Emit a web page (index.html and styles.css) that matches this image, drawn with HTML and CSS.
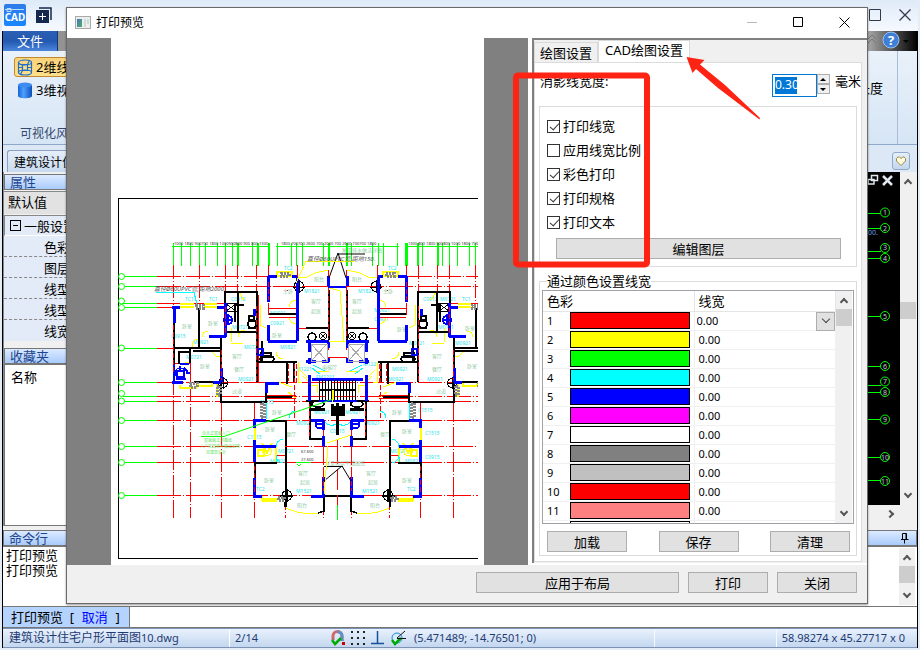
FILE: index.html
```html
<!DOCTYPE html>
<html lang="zh-CN">
<head>
    <meta charset="UTF-8">
    <meta name="viewport" content="width=device-width, initial-scale=1.0">
    <title>打印预览</title>
    <link rel="stylesheet" href="styles.css">
</head>
<body>
    <div class="app">
        <header class="app-title">
            <svg class="logo" width="22" height="22" viewBox="0 0 22 22">
                <defs>
                    <linearGradient id="logoFill" x1="0" y1="0" x2="0" y2="1">
                        <stop offset="0" stop-color="#2f7be8"/><stop offset="1" stop-color="#1a86ff"/>
                    </linearGradient>
                </defs>
                <rect width="22" height="22" rx="2" fill="url(#logoFill)"/>
                <path d="M1 5.5H20M3 7.5h4v-3h-4z" stroke="#b9dcff" fill="none"/>
                <text x="11" y="17" text-anchor="middle" font-size="10" font-weight="700" fill="#fff">CAD</text>
            </svg>
            <button class="quick" aria-label="新建">
                <svg width="16" height="16" viewBox="0 0 16 16"><path d="M3 1H15V13" fill="none" stroke="#14294b" stroke-width="1.5"/><rect y="3" width="13" height="13" fill="#14294b"/><path d="M6.500 6v7M3 9.500h7" stroke="#fff"/></svg>
            </button>
            <span class="spacer"></span>
            <button class="win-btn" aria-label="最大化"><svg width="12" height="12" viewBox="0 0 12 12"><path d="M.5.5h11v11H.5z" fill="none" stroke="#33394a"/></svg></button>
            <button class="win-btn" aria-label="关闭"><svg width="12" height="12" viewBox="0 0 12 12"><path d="M.5.5l11 11M11.500.5l-11 11" fill="none" stroke="#33394a" stroke-width="1.3"/></svg></button>
        </header>

        <div class="frame">
            <nav class="ribbon-tabs">
                <button class="file-tab">文件</button>
                <span class="spacer"></span>
                <svg width="50" height="20" viewBox="0 0 50 20">
                    <path d="M1 8l4-4 4 4M1 12l4-4 4 4" fill="none" stroke="#777"/>
                    <circle cx="24" cy="9" r="8" fill="#3f7fd6" stroke="#9cc0f0"/>
                    <text x="24" y="14" text-anchor="middle" font-size="13" font-weight="700" fill="#fff">?</text>
                    <path d="M36 9h6l-3 3z" fill="#000"/>
                </svg>
            </nav>

            <section class="ribbon">
                <div class="ribbon-group">
                    <button class="ribbon-btn active">
                        <svg width="16" height="17" viewBox="0 0 16 17"><g fill="none" stroke="#1f6fcc" stroke-width="1.2"><ellipse cx="8" cy="3.500" rx="6.500" ry="2.500"/><ellipse cx="8" cy="13.500" rx="6.500" ry="2.500"/><path d="M1.500 3.500v10M14.500 3.500v10M5.500 5.500v6h5v-6zM5.500 11.500l-2 4M10.500 5.500l2-4M1.500 8.500h4M10.500 8.500h4"/></g></svg>
                        <span>2维线框</span>
                    </button>
                    <button class="ribbon-btn">
                        <svg width="16" height="17" viewBox="0 0 16 17"><defs><linearGradient id="cyl"><stop offset="0" stop-color="#1565d8"/><stop offset=".4" stop-color="#4fa0ff"/><stop offset="1" stop-color="#0d4fb8"/></linearGradient></defs><path d="M1 3v11c0 3 14 3 14 0V3z" fill="url(#cyl)"/><ellipse cx="8" cy="3" rx="7" ry="2.500" fill="#3f8df0"/></svg>
                        <span>3维视图</span>
                    </button>
                    <p class="ribbon-caption">可视化风格</p>
                </div>
                <div class="ribbon-end"><span>长度</span></div>
            </section>

            <div class="doc-tabs">
                <button class="doc-tab">建筑设计住宅</button>
                <span class="spacer"></span>
                <button class="fav-btn" aria-label="收藏"><svg width="12" height="12" viewBox="0 0 12 12"><path d="M6 10.500L1.500 6V3.500L3 2h1.500L6 3.500 7.500 2H9l1.500 1.500V6z" fill="#fffbe0" stroke="#9a8a3c"/></svg></button>
            </div>

            <main class="workspace">
                <aside class="side">
                    <h2 class="bar">属性</h2>
                    <div class="default-row">默认值</div>
                    <div class="prop-head"><i class="minus"></i>一般设置</div>
                    <ul class="props">
                        <li>色彩</li>
                        <li>图层</li>
                        <li>线型</li>
                        <li>线型</li>
                        <li>线宽</li>
                    </ul>
                    <h2 class="bar fav-bar">收藏夹</h2>
                    <div class="fav-list">名称</div>
                </aside>
                <section class="model">
                    <div class="model-view">
                        <svg width="34" height="332" viewBox="866 172 34 332">
                            <g stroke="#dfe6ee" fill="none" stroke-width="1.500"><path d="M871.500 175.500h6v5h-6zM868 179.500h6v4.500h-6z" fill="#000"/><path d="M883 176l9 9M892 176l-9 9" stroke-width="2.500"/></g>
                            <g stroke="#0f0" fill="none">
                                <path d="M866 213.500h14M866 228.500h14M866 251.500h15M866 258.500h14M866 316.500h14M866 366.500h14M866 385.500h15M866 392.500h14M866 419.500h14M866 457.500h14M866 480.500h14"/>
                                <circle cx="885" cy="212.500" r="4.500"/><circle cx="885" cy="228" r="4.500"/><circle cx="885" cy="248" r="4.500"/><circle cx="885" cy="258" r="4.500"/><circle cx="885" cy="316" r="4.500"/><circle cx="885" cy="366" r="4.500"/><circle cx="885" cy="381.500" r="4.500"/><circle cx="885" cy="392" r="4.500"/><circle cx="885" cy="419.500" r="4.500"/><circle cx="885" cy="457" r="4.500"/><circle cx="885" cy="481" r="4.500"/>
                            </g>
                            <g fill="#c8c8dc" font-size="7" text-anchor="middle">
                                <text x="885" y="215">1</text><text x="885" y="231">2</text><text x="885" y="250">3</text><text x="885" y="261">4</text><text x="885" y="319">5</text><text x="885" y="369">6</text><text x="885" y="384">7</text><text x="885" y="395">8</text><text x="885" y="422">9</text><text x="885" y="460">10</text><text x="885" y="484">11</text>
                            </g>
                            <text x="868" y="235" font-size="7" fill="#6d9be0">00.</text>
                        </svg>
                    </div>
                    <div class="vscroll"><i class="arrow up"></i><i class="thumb"></i><i class="arrow down"></i></div>
                    <div class="hscroll"><i class="arrow right"></i></div>
                </section>
            </main>

            <h2 class="bar command-bar">命令行
                <svg width="8" height="11" viewBox="0 0 8 11"><path d="M1.500 6V.5h4V6M5 .5V6M0 6.500h7.500M3.500 7v3.500" fill="none" stroke="#000"/></svg>
            </h2>
            <div class="command-log">
                <div><p>打印预览</p><p>打印预览</p></div>
                <div class="vscroll"><i class="arrow up"></i><i class="thumb"></i><i class="arrow down"></i></div>
            </div>
            <div class="command-line">
                <label for="cmd">打印预览 &nbsp;[ &nbsp;<a href="#">取消</a> &nbsp;]</label>
                <input type="text" id="cmd">
            </div>
            <footer class="status">
                <span class="file-name">建筑设计住宅户形平面图<small>10.dwg</small></span>
                <span class="page-no">2/14</span>
                <span class="snaps">
                    <svg width="16" height="16" viewBox="0 0 16 16"><path d="M3 10V6a4 4 0 0 1 9 0v5" fill="none" stroke="#d06a6a" stroke-width="3"/><path d="M7.500 2a4 4 0 0 1 4.500 4v5" fill="none" stroke="#5f8fc8" stroke-width="3"/><path d="M2 10l3 4 6-6" fill="none" stroke="#0a0" stroke-width="2.500"/><rect x="12" y="12" width="3" height="3" fill="#c00"/></svg>
                    <svg width="16" height="16" viewBox="0 0 16 16"><path d="M1 2h15M1 8h15M1 14h15" stroke="#222" stroke-width="2" stroke-dasharray="2 4"/></svg>
                    <svg width="16" height="16" viewBox="0 0 16 16"><path d="M7.500 1v12M1 13.500h13" stroke="#14529e" stroke-width="1.500" fill="none"/></svg>
                    <svg width="16" height="16" viewBox="0 0 16 16"><circle cx="7" cy="8" r="5" fill="#d4ecff" stroke="#28c"/><path d="M2 10l3 4 6-6" fill="none" stroke="#0a0" stroke-width="2.500"/><path d="M7 8l8-7M7 8.500h9" stroke="#111"/></svg>
                </span>
                <span class="coords">(5.471489; -14.76501; 0)</span>
                <span class="cell"></span>
                <span class="extent">58.98274 x 45.27717 x 0</span>
            </footer>
        </div>
    </div>

    <div class="dialog" role="dialog" aria-labelledby="dialogTitle">
        <header class="dialog-title">
            <svg width="16" height="13" viewBox="0 0 16 13"><defs><linearGradient id="ic" x1="0" y1="0" x2="1" y2="1"><stop offset="0" stop-color="#4a76b8"/><stop offset="1" stop-color="#4fae6a"/></linearGradient></defs><rect x=".5" y=".5" width="15" height="12" fill="#eee" stroke="#aaa"/><rect x="2" y="3" width="5" height="8" fill="url(#ic)"/><path d="M9 3h2v8H9zM12 3h2v5h-2z" fill="#c9dcd6"/></svg>
            <h1 id="dialogTitle">打印预览</h1>
            <span class="spacer"></span>
            <button class="win-btn" aria-label="最小化" disabled><svg width="11" height="11" viewBox="0 0 11 11"><path d="M0 5.500h10" stroke="#bbb"/></svg></button>
            <button class="win-btn" aria-label="最大化"><svg width="11" height="11" viewBox="0 0 11 11"><path d="M.5.5h9v9h-9z" fill="none" stroke="#000"/></svg></button>
            <button class="win-btn" aria-label="关闭"><svg width="11" height="11" viewBox="0 0 11 11"><path d="M.5.5l10 10M10.500.5l-10 10" stroke="#000"/></svg></button>
        </header>

        <div class="dialog-body">
            <div class="preview">
                <svg class="paper" viewBox="111 38 373 527" preserveAspectRatio="xMinYMin">
                    <defs>
                        <clipPath id="sheet"><path d="M111 190H478V565H111z"/></clipPath>
                        <!-- left half of the floor, mirrored for the right half -->
                        <g id="half" fill="none">
                            <!-- dimension ticks -->
                            <path d="M172 246.500H270M276 246.500H338M173.500 243v23M181.500 243v23M190.500 243v23M199.500 243v23M205.500 243v23M217.500 243v23M225.500 243v23M232.500 243v23M252.500 243v23M269.500 243v23M277.500 243v23M291.500 243v23M296.500 243v23M302.500 243v23M323.500 243v23" stroke="#0f0"/>
                            <path d="M237.500 243v23M257.500 243v23M268.500 243v23M328.500 243v23" stroke="#0f0" stroke-width="2"/>
                            <path d="M173.500 265v40M199.500 265v83M225.500 265v40M237.500 265v60M256.500 265v30M268.500 265v50M297.500 265v12" stroke="#f00" stroke-dasharray="14 2 1 2"/>
                            <path d="M173.500 375v143M190.500 382v136M221.500 402v116M254.500 402v116M285.500 440v78M323.500 420v98" stroke="#f00" stroke-dasharray="20 2 1 2"/>
                            <!-- windows, doors and balconies -->
                            <path d="M180 304h14M180 307h14M204 304h13M204 307h13M173.500 333v6M277 271.500h15v4h-15zM262 498.500h15M262 500.500h15M254.500 428v12M180 384.500v3h17M198 382v4h14v-4M217 384v12h4M262 496v4h15" stroke="#ff0" stroke-width="2"/>
                            <path d="M193 348a6 6 0 0 1 6-9M202 337a6 6 0 0 1 6-6M231 328v14M231 343.500h12M238 337a7 7 0 0 1 7-7M260 305v20l6 3M289 307a8 8 0 0 1 7-7M289 317a8 8 0 0 0 7 7M212 350a8 8 0 0 0 8 7M185 362h5v-10M239 292l5 8M297 277l8 1 10-5 13-3M298 362v20h4M303 376l6 6M259 362h12M276 352a7 7 0 0 0 7 7M278 382l14 5M288 392l8 6M300 370l8 8M315 371h14M310 385h7v8M286 508q14 7 32 5" stroke="#ff0"/>
                            <path d="M256 447h20v15M262 443l5 10 5-10M258 450h6v6h-6z" stroke="#ff0" stroke-width="2"/><circle cx="267" cy="451" r="4.500" stroke="#ff0"/>
                            <!-- axes inside the plan -->
                            <path d="M269 308.500h28M269 317.500h28M297 328h13M173 363h18M190.500 348v34M258 295v87M287 362v20M266 395.500h30M266 398h30M328.500 270v80M328 357h10M310 439h14M276 455h9M287.500 290v1M309 402v36" stroke="#f00" stroke-width="1"/>
                            <!-- cyan joinery -->
                            <path d="M156 292.500h38l3 12M266 402v17M276 447a8 8 0 0 1 7-8M276 455a8 8 0 0 0 7 8M289 418a7 7 0 0 1 6-7M324 420a8 8 0 0 0 14 2M276 457v5M312 368l8 6M313 365l12 6" stroke="#0ff"/>
                            <!-- structural walls -->
                            <g stroke="#000" stroke-width="2">
                                <path d="M174 307v68M174 348h47M225 303v-11h32v90M199 308v40M225 331.500h32M190 349v14M221 336v46M221 382v20h45v-20M269 313.500h28M328.500 290v50M258 361.500h39M287 362v22M294 362v20M306 327.500h23M266 420.500h19M266 396.500h26M285.500 420v26M285.500 447v60M254 462.500h23M254.500 462v20M309.500 401v38h13M324 496h14M194 382h20M306 401h32M262 341v20"/>
                                <path d="M244 305h-9v17M238 292v39M220 351h-27M190 352h-11v12M285 507v-5M318 513l6-2v-14" stroke-width="1.500"/>
                                <circle cx="252" cy="324" r="4"/><path d="M249 316h5v5h-5zM248 328h9"/>
                                <ellipse cx="267" cy="359" rx="7" ry="3.500"/><path d="M261 353h10v4h-10z"/>
                                <path d="M225 303h12v8h-12M226 304l10 7M236 304l-10 7" stroke-width="1"/>
                                <circle cx="223" cy="383" r="4.500" stroke-width="1"/><path d="M218 383h10M223 377v12" stroke-width="1"/>
                                <circle cx="299" cy="286.500" r="5" stroke-width="1"/><path d="M293 287h12M299 280v13" stroke-width="1"/>
                                <circle cx="287" cy="495.500" r="5" stroke-width="1"/><path d="M280 495.500h13M287 489v13"/>
                                <circle cx="312" cy="337" r="4" stroke-width="1.500"/><circle cx="323" cy="336" r="3.500" stroke-width="1"/><path d="M320 333l6 6M326 333l-6 6M307 340h9" stroke-width="1"/>
                                <ellipse cx="318" cy="404" rx="6" ry="3"/><path d="M311 409h14M332 404v12M335 406v10" stroke-width="3"/>
                                <path d="M337 403v32"/>
                            </g>
                            <path d="M264 403h-3v15h3zM217 386h3v9h-3zM190 383h7v4h-7zM196 305h7v3h-7zM281 273h8v3h-8zM278 497h6v3h-6z" stroke="#888" stroke-width="3" stroke-dasharray="2 1"/>
                            <!-- blue walls -->
                            <g stroke="#00f" stroke-width="3">
                                <path d="M174 307v16M172 307.500h8M217 307.500h8M225.500 303v34M209 336.500h17M268.500 276v26M268 276.500h9M292 276.500h5M297 277v64M268.500 325v16M268 341.500h29M328 276v10M306 341.500h23M309 342v10M309 358v6M328 342v6M328 358v4M306 361.500h10M322 361.500h7M309 375v26M172 382.500h11M213 382.500h8M265 383.500h14M266 383v10M253 420.500h13M254.500 420v8M254.500 440v22M254.500 478v18M253 496.500h9M311 496.500h13M323.500 477v20M311 420.500h13M323.500 420v10M323.500 436v11M254 446.500h22M221 368v14M312 379h26M254 309v7"/>
                                <path d="M174 364v17M177 371h7v6h-7zM180 366v4M180 364h9M186 373h4M176 379h10M184 368l4 4M258 349h5v6h-5z" stroke-width="2"/>
                                <circle cx="228" cy="320" r="4" stroke-width="2"/><path d="M223 320h10M228 314v11" stroke-width="2"/>
                                <circle cx="180" cy="373" r="5" stroke-width="1"/>
                                <circle cx="320" cy="424" r="4.500" stroke-width="2"/><path d="M317 424h8" stroke-width="2"/>
                            </g>
                            <path d="M173.500 325v48M225.500 307v27M256.500 306v75M268.500 282v18M309.500 404v32M296 364v18M323.500 446v45M254.500 466v28M221.500 350v30M328.500 289v50M288.500 364v17M294.500 364v56" stroke="#f00" stroke-dasharray="5 2"/>
                            <!-- lifts -->
                            <path d="M311 344h16v17h-16zM311 344l16 17M327 344l-16 17" stroke="#aaa"/>
                        </g>
                    </defs>
                    <g clip-path="url(#sheet)">
                        <path d="M480 198.500H118.500V558.500H480" fill="none" stroke="#000" shape-rendering="crispEdges"/>
                        <g fill="none" stroke="#0f0">
                            <path d="M125 276.500h32M125 286.500h32M123 303.500h34M125 307.500h32M125 348.500h32M125 382.500h32M123 396.500h34M125 401.500h32M125 420.500h32M125 446.500h32M125 462.500h32M125 495.500h32" shape-rendering="crispEdges"/>
                            <circle cx="121.500" cy="276.500" r="3"/><circle cx="121.500" cy="286.500" r="3"/><circle cx="121.500" cy="301" r="3"/><circle cx="121.500" cy="307.500" r="3"/><circle cx="121.500" cy="348" r="3"/><circle cx="121.500" cy="382.500" r="3"/><circle cx="121.500" cy="393.500" r="3"/><circle cx="121.500" cy="401" r="3"/><circle cx="121.500" cy="420.500" r="3"/><circle cx="121.500" cy="446.500" r="3"/><circle cx="121.500" cy="462.500" r="3"/><circle cx="121.500" cy="495.500" r="3"/>
                        </g>
                        <path d="M157 276.500h111M408 276.500h72M157 286.500h323M157 303.500h78M440 303.500h40M157 307.500h16M157 348.500h16M157 382.500h323M157 396.500h323M157 401.500h323M157 420.500h323M157 446.500h108M420 446.500h60M285 446.500h105M157 462.500h323M157 495.500h323M337.500 440v50" fill="none" stroke="#f00" stroke-dasharray="24 2 1 2" shape-rendering="crispEdges"/>
                        <g class="room-text" fill="#8fcba6">
                            <text x="182" y="328">卧室</text><text x="208" y="325">卧室</text><text x="232" y="358">客厅</text><text x="234" y="371">餐厅</text><text x="200" y="368">卧室</text><text x="283" y="293">主卧</text><text x="272" y="337">卧室</text><text x="311" y="303">客厅</text><text x="311" y="313">起居</text><text x="352" y="303">客厅</text><text x="352" y="313">起居</text><text x="314" y="281">阳台</text><text x="352" y="281">阳台</text><text x="383" y="293">主卧</text><text x="397" y="331">卧室</text><text x="432" y="358">客厅</text><text x="432" y="371">餐厅</text><text x="465" y="330">卧室</text><text x="467" y="368">卧室</text><text x="272" y="414">卧室</text><text x="265" y="431">卧室</text><text x="286" y="436">餐厅</text><text x="298" y="475">客厅</text><text x="300" y="484">起居</text><text x="264" y="482">卧室</text><text x="366" y="475">客厅</text><text x="368" y="484">起居</text><text x="402" y="482">卧室</text><text x="402" y="433">卧室</text><text x="392" y="414">卧室</text><text x="380" y="436">餐厅</text><text x="297" y="507">阳台</text><text x="370" y="507">阳台</text><text x="232" y="393">过道</text><text x="436" y="393">过道</text><text x="322" y="369">电梯厅</text><text x="325" y="465">详见首层平面图纸</text><text x="342" y="252">屋面排水做法详图</text>
                        </g>
                        <g class="room-text" fill="#2be4ec">
                            <text x="185" y="301">TC1</text><text x="209" y="301">TC1</text><text x="231" y="301">C0912</text><text x="171" y="338">C0915</text><text x="193" y="344">M0921</text><text x="232" y="329">M0721</text><text x="284" y="270">TC2</text><text x="270" y="315">M0921</text><text x="270" y="325">C0921</text><text x="280" y="349">M0821</text><text x="186" y="359">M0721</text><text x="238" y="381">M0921</text><text x="244" y="349">M0721</text><text x="259" y="404">C1515</text><text x="247" y="439">C1515</text><text x="278" y="453">M0721</text><text x="270" y="463">M0821</text><text x="296" y="493">M1521</text><text x="256" y="491">TC2</text><text x="296" y="371">M1221</text><text x="316" y="379">FM1221</text><text x="314" y="414">M0921</text><text x="345" y="414">M0921</text><text x="330" y="433">C0915</text><text x="296" y="425">M0921</text><text x="364" y="425">M0921</text><text x="392" y="371">M0921</text><text x="388" y="381">M0921</text><text x="363" y="366">M1221</text><text x="304" y="293">M1821</text><text x="358" y="293">M1821</text><text x="388" y="270">TC2</text><text x="374" y="312">M0921</text><text x="374" y="321">C0921</text><text x="423" y="301">C0912</text><text x="440" y="301">M0721</text><text x="462" y="301">TC1</text><text x="455" y="345">M0921</text><text x="438" y="329">M0721</text><text x="409" y="345">M0821</text><text x="427" y="381">M0921</text><text x="418" y="412">C1515</text><text x="425" y="435">C1515</text><text x="425" y="459">C0915</text><text x="390" y="453">M0721</text><text x="405" y="463">M0821</text><text x="362" y="493">M1521</text><text x="407" y="491">TC2</text>
                        </g>
                        <use href="#half" shape-rendering="crispEdges"/>
                        <use href="#half" shape-rendering="crispEdges" transform="matrix(-1 0 0 1 675 0)"/>
                        <!-- stairs and entrance -->
                        <g fill="none" shape-rendering="crispEdges">
                            <path d="M319.500 380v20M322.500 380v20M325.500 380v20M328.500 380v20M331.500 380v20M334.500 380v20M337.500 380v20M340.500 380v20M343.500 380v20M346.500 380v20M349.500 380v20M352.500 380v20M355.500 380v20" stroke="#000"/>
                            <path d="M319 389.500h37" stroke="#000" stroke-width="2"/>
                            <path d="M319 400.500h38" stroke="#00f" stroke-width="2"/>
                            <path d="M328 286.500h18" stroke="#00f" stroke-width="2"/>
                            <path d="M303 286.500h25M346 286.500h25" stroke="#f00"/>
                            <path d="M329 341.500h17M332.500 390v12M333 390v10M330 288l10 3 4 50" stroke="#ff0"/>
                            <path d="M324 481l18-15 9 15M324 466.500h19M329 278l9-25 8 25M338 254h27" stroke="#000" shape-rendering="auto"/>
                            <path d="M328 446l-4 48M327 443l24-8M306 261h48M306 261l-10 22" stroke="#ff0"/>
                            <path d="M337.500 505v15" stroke="#0f0"/>
                            <path d="M337.500 495v10" stroke="#f00"/>
                        </g>
                        <path d="M201 436.500h23l108-37M296 462.500h15M297 464l2 2 2-2" fill="none" stroke="#0f0"/>
                        <g class="note-text" fill="#555">
                            <text x="154" y="291">直径Ø60UPVC管,距地2000.</text>
                            <text x="307" y="261">直径Ø60UPVC管,距地150.</text>
                        </g>
                        <g class="dim-text" fill="#333">
                            <text x="174" y="245">1000 1800 900700 1800 1000900800 900 800 1300</text>
                            <text x="281" y="245">1800 700700 2600 700 2000 700 2600 700700 1800</text>
                            <text x="408" y="245">1300 800 1800 900800 1000 1800 700</text>
                            <text x="301" y="453">67.600</text><text x="301" y="461">27.600</text>
                        </g>
                        <g class="roof-text" fill="#5fe05f">
                            <text x="202" y="435">自走式屋面入口</text>
                            <text x="204" y="442">屋面做法详图纸</text>
                            <text x="200" y="448">入户花园排水做法说明</text>
                            <text x="206" y="454">见建筑设计</text>
                        </g>
                    </g>
                </svg>
            </div>

            <div class="settings">
                <div class="settings-frame">
                    <div class="tabs" role="tablist">
                        <button class="tab" role="tab">绘图设置</button>
                        <button class="tab selected" role="tab">CAD绘图设置</button>
                    </div>
                    <div class="tab-page">
                        <div class="width-row">
                            <label for="lineWidth">消影线宽度:</label>
                            <input type="text" id="lineWidth" value="0.30">
                            <span class="spin">
                                <button aria-label="增加"><i class="tri up"></i></button>
                                <button aria-label="减少"><i class="tri down"></i></button>
                            </span>
                            <span>毫米</span>
                        </div>

                        <fieldset class="options">
                            <label><input type="checkbox" checked>打印线宽</label>
                            <label><input type="checkbox">应用线宽比例</label>
                            <label><input type="checkbox" checked>彩色打印</label>
                            <label><input type="checkbox" checked>打印规格</label>
                            <label><input type="checkbox" checked>打印文本</label>
                            <button class="btn">编辑图层</button>
                        </fieldset>

                        <fieldset class="colors">
                            <legend>通过颜色设置线宽</legend>
                            <div class="list">
                                <table>
                                    <thead>
                                        <tr><th colspan="2">色彩</th><th>线宽</th></tr>
                                    </thead>
                                    <tbody>
                                        <tr><td>1</td><td><i class="swatch red"></i></td><td class="editing"><div class="combo"><select aria-label="线宽"><option>0.00</option></select></div></td></tr>
                                        <tr><td>2</td><td><i class="swatch yellow"></i></td><td>0.00</td></tr>
                                        <tr><td>3</td><td><i class="swatch green"></i></td><td>0.00</td></tr>
                                        <tr><td>4</td><td><i class="swatch cyan"></i></td><td>0.00</td></tr>
                                        <tr><td>5</td><td><i class="swatch blue"></i></td><td>0.00</td></tr>
                                        <tr><td>6</td><td><i class="swatch magenta"></i></td><td>0.00</td></tr>
                                        <tr><td>7</td><td><i class="swatch white"></i></td><td>0.00</td></tr>
                                        <tr><td>8</td><td><i class="swatch gray"></i></td><td>0.00</td></tr>
                                        <tr><td>9</td><td><i class="swatch silver"></i></td><td>0.00</td></tr>
                                        <tr><td>10</td><td><i class="swatch red"></i></td><td>0.00</td></tr>
                                        <tr><td>11</td><td><i class="swatch pink"></i></td><td>0.00</td></tr>
                                        <tr><td></td><td><i class="swatch"></i></td><td></td></tr>
                                    </tbody>
                                </table>
                                <div class="vscroll"><i class="arrow up"></i><i class="thumb"></i><i class="arrow down"></i></div>
                            </div>
                            <div class="list-actions">
                                <button class="btn">加载</button>
                                <button class="btn">保存</button>
                                <button class="btn">清理</button>
                            </div>
                        </fieldset>
                    </div>
                </div>
            </div>
        </div>

        <footer class="dialog-footer">
            <button class="btn wide">应用于布局</button>
            <button class="btn">打印</button>
            <button class="btn">关闭</button>
        </footer>

        <svg class="callout" width="250" height="214" viewBox="512 56 250 214">
            <rect x="516" y="75.500" width="131" height="189" rx="2" fill="none" stroke="#ff2314" stroke-width="6"/>
            <path d="M686.500 57L704.500 60 700 64.500 725 85 760 118 759.500 119.500 718 88 696 69 692.500 73z" fill="#ff2314"/>
        </svg>
    </div>
</body>
</html>
```
FILE: styles.css
```css
* {
    margin: 0;
    padding: 0;
    box-sizing: border-box;
}

body {
    font-family: "Noto Sans", "Noto Sans CJK SC", sans-serif;
    font-size: 13px;
    line-height: 20px;
    color: #000;
    background-color: #e3ecf7;
    overflow: hidden;
}

button, input, select {
    font: inherit;
    color: inherit;
    border: none;
    background: none;
}

h1, h2, th {
    font-size: inherit;
    font-weight: normal;
}

svg {
    display: block;
}

i {
    display: block;
    font-style: normal;
}

.spacer {
    flex: 1;
}

/* main window */
.app {
    height: 100vh;
    display: flex;
    flex-direction: column;
    padding: 0 2px 2px;
}

.app-title {
    height: 31px;
    display: flex;
    align-items: center;
    gap: 10px;
    padding: 0 7px 2px 2px;
    background: linear-gradient(#dfeaf8, #f6faff);
}

.app-title .win-btn {
    margin-left: 8px;
}

.frame {
    flex: 1;
    min-height: 0;
    display: flex;
    flex-direction: column;
    border: 1px solid #000;
    border-width: 0 1px;
    background-color: #f0f0f0;
    white-space: nowrap;
}

.ribbon-tabs {
    height: 20px;
    flex: none;
    display: flex;
    background: linear-gradient(90deg, #888, #ccc 40%, #bbb 94%, #000);
}

.file-tab {
    width: 55px;
    color: #fff;
    background: linear-gradient(#2c5fb4, #2359b0 50%, #4a86dc);
    border-right: 1px solid #14387c;
}

.ribbon {
    height: 94px;
    flex: none;
    display: flex;
    justify-content: space-between;
    background: linear-gradient(#e9f1fa, #d6e5f5);
    border-bottom: 1px solid #8fa9c8;
}

.ribbon-group {
    width: 150px;
    padding: 6px 0 0 11px;
}

.ribbon-btn {
    width: 120px;
    height: 20px;
    display: flex;
    align-items: center;
    gap: 3px;
    padding-left: 2px;
    margin-bottom: 3px;
    border: 1px solid transparent;
    border-radius: 3px;
}

.ribbon-btn.active {
    border-color: #c08a30;
    background: linear-gradient(#fbd27c, #ffe08a);
}

.ribbon-caption {
    margin-top: 24px;
    padding-left: 6px;
    font-size: 12px;
    color: #33476b;
}

.ribbon-end {
    width: 60px;
    margin-right: 19px;
    padding: 27px 14px 0 0;
    display: flex;
    justify-content: flex-end;
    border-right: 1px solid #a9bdd6;
}

.doc-tabs {
    height: 27px;
    flex: none;
    display: flex;
    align-items: flex-end;
    padding: 0 7px 0 4px;
    background-color: #dce8f6;
}

.doc-tab {
    height: 22px;
    padding: 2px 6px 0;
    font-size: 12px;
    background: linear-gradient(#e4eefa, #c8daf0);
    border-left: 1px solid #8fa0bb;
    border-top: 1px solid #8fa0bb;
    border-radius: 3px 0 0 0;
}

.fav-btn {
    width: 18px;
    height: 18px;
    margin-bottom: 2px;
    padding-left: 2px;
    border: 1px solid #8fa9c8;
    border-radius: 3px;
    background: linear-gradient(#e6effa, #c3d6ec);
}

.workspace {
    flex: 1;
    min-height: 0;
    display: flex;
}

.side {
    width: 200px;
    display: flex;
    flex-direction: column;
    padding-top: 2px;
    border-left: 1px solid #8a8a8a;
}

.bar {
    height: 16px;
    flex: none;
    line-height: 14px;
    padding-left: 5px;
    color: #1f458e;
    border: 1px solid #777;
    background: linear-gradient(#dbeaff, #a9cbfb);
}

.default-row {
    height: 23px;
    flex: none;
    margin-top: 1px;
    padding-left: 4px;
    line-height: 21px;
    background-color: #e2e2e2;
    border-top: 1px solid #888;
}

.prop-head {
    height: 21px;
    flex: none;
    display: flex;
    align-items: center;
    gap: 3px;
    margin-top: 1px;
    padding-left: 5px;
    border: 1px solid #888;
    border-bottom-color: #fff;
    background-color: #e2ebf7;
}

.minus {
    width: 11px;
    height: 11px;
    padding: 4px 2px;
    border: 1px solid #000;
    background: linear-gradient(#000, #000) content-box;
}

.props {
    list-style: none;
}

.props li {
    height: 21px;
    padding-top: 1px;
    padding-left: 40px;
    background-color: #e2ebf7;
    border-bottom: 1px dashed #888;
}

.props li:last-child {
    border-bottom: none;
}

.fav-bar {
    margin-top: 7px;
}

.fav-list {
    flex: 1;
    padding: 2px 6px;
    background-color: #fff;
    border: 1px solid #777;
}

.model {
    flex: 1;
    display: grid;
    grid-template-columns: 1fr 16px;
    grid-template-rows: 1fr 21px;
    padding-right: 1px;
}

.model-view {
    background-color: #000;
    display: flex;
    justify-content: flex-end;
}

.model .vscroll .thumb {
    margin-top: 116px;
    height: 17px;
}

.hscroll {
    display: flex;
    align-items: center;
    justify-content: flex-end;
    padding-right: 7px;
    margin-bottom: 4px;
    background-color: #f0f0f0;
}

.vscroll {
    width: 16px;
    flex: none;
    display: flex;
    flex-direction: column;
    align-items: center;
    padding: 8px 0;
    background-color: #f0f0f0;
}

.thumb {
    width: 100%;
    height: 17px;
    margin-top: 4px;
    background-color: #cdcdcd;
}

.arrow {
    width: 6px;
    height: 6px;
    border: 2px solid #555;
    border-width: 2px 0 0 2px;
    transform: rotate(45deg);
}

.arrow.down {
    margin-top: auto;
    transform: rotate(225deg);
}

.arrow.right {
    transform: rotate(135deg);
}

.command-bar {
    margin-top: 4px;
    display: flex;
    align-items: center;
    justify-content: space-between;
    padding-right: 7px;
}

.command-log {
    height: 60px;
    flex: none;
    display: flex;
    justify-content: space-between;
    padding: 1px 2px 1px 3px;
    line-height: 15px;
    background-color: #fff;
    border-top: 1px solid #777;
}

.command-line {
    height: 22px;
    flex: none;
    display: flex;
    background-color: #fff;
    border: 1px solid #777;
    border-width: 1px 0;
}

.command-line label {
    width: 127px;
    padding-left: 8px;
    background-color: #b4d3ff;
    border-right: 1px solid #777;
}

.command-line input {
    flex: 1;
    outline: none;
}

.command-line a {
    margin: 0 1px;
    color: #00f;
    text-decoration: none;
}

.status {
    height: 20px;
    flex: none;
    display: flex;
    align-items: center;
    font-size: 11px;
    color: #1f3a73;
    background: linear-gradient(#e9f2fd, #c3d7ef);
    border: 1px solid #7c93b5;
    border-width: 1px 0;
}

.status span {
    height: 18px;
    line-height: 17px;
}

.file-name {
    width: 227px;
    padding-left: 6px;
    font-size: 12px;
    border-right: 1px solid #fff;
}

.file-name small {
    font-size: 11px;
}

.page-no {
    width: 100px;
    padding-left: 5px;
}

.snaps {
    display: flex;
    align-items: center;
    gap: 4px;
}

.coords {
    flex: 1;
    padding-left: 8px;
}

.cell {
    width: 122px;
    border-left: 1px solid #f4f9ff;
}

.extent {
    padding: 0 12px 0 5px;
    border-left: 1px solid #f4f9ff;
}

/* print preview dialog */
.dialog {
    position: absolute;
    left: 66px;
    right: 52px;
    top: 7px;
    bottom: 46px;
    display: flex;
    flex-direction: column;
    background-color: #f0f0f0;
    border: 1px solid #6a6a6a;
    box-shadow: 0 1px 2px rgba(0, 0, 0, 0.4);
}

.dialog-title {
    height: 30px;
    flex: none;
    display: flex;
    align-items: center;
    gap: 5px;
    padding: 0 17px 1px 8px;
    background-color: #fff;
}

.dialog-title h1 {
    font-size: 12px;
}

.dialog-title .win-btn {
    margin-left: 30px;
}

.dialog-body {
    flex: 1;
    min-height: 0;
    display: flex;
}

.preview {
    flex: 1;
    min-width: 0;
    padding: 0 44px;
    background-color: #808080;
}

.paper {
    width: 100%;
    height: 100%;
    background-color: #fff;
}

.room-text {
    font-size: 5px;
}

.note-text {
    font-size: 6px;
    font-style: italic;
}

.dim-text, .roof-text {
    font-size: 4px;
}

.settings {
    width: 339px;
    flex: none;
    display: flex;
    padding: 0 0 2px 4px;
    background-color: #fff;
}

.settings-frame {
    flex: 1;
    display: flex;
    flex-direction: column;
    padding: 0 5px 2px 0;
    background-color: #f0f0f0;
    border-left: 2px solid #808080;
    border-top: 2px solid #808080;
}

.tabs {
    display: flex;
    align-items: flex-end;
    height: 22px;
    flex: none;
}

.tab {
    height: 20px;
    padding: 0 5px;
    line-height: 16px;
    border: 1px solid #d9d9d9;
    border-bottom: none;
}

.tab.selected {
    height: 23px;
    margin-bottom: -1px;
    padding: 0 6px 5px;
    background-color: #fff;
}

.tab-page {
    flex: 1;
    display: flex;
    flex-direction: column;
    padding: 0 0 5px;
    background-color: #fff;
    border: 1px solid #dcdcdc;
}

.width-row {
    height: 43px;
    flex: none;
    display: flex;
    padding: 11px 0 0 5px;
}

.width-row label {
    height: 13px;
    margin: 4px auto 0 0;
    display: flex;
    align-items: flex-end;
    overflow: hidden;
}

.width-row input {
    width: 45px;
    height: 23px;
    padding: 0 0 2px 2px;
    font-size: 12px;
    border: 1px solid #0078d7;
    color: #fff;
    background: linear-gradient(90deg, transparent 2px, #0078d7 2px, #0078d7 24px, transparent 24px) no-repeat 0 2px / 100% 17px;
}

.width-row > span:last-child {
    line-height: 14px;
}

.spin {
    display: flex;
    flex-direction: column;
    margin-right: 5px;
}

.spin button {
    width: 13px;
    height: 10px;
    display: flex;
    align-items: center;
    justify-content: center;
    border: 1px solid #adadad;
    background-color: #f0f0f0;
}

.tri {
    border: 3px solid transparent;
}

.tri.up {
    border-top: none;
    border-bottom-color: #000;
}

.tri.down {
    border-bottom: none;
    border-top-color: #000;
}

fieldset {
    min-width: 0;
    margin: 0 4px;
    border: 1px solid #dcdcdc;
}

.options {
    display: flex;
    flex-direction: column;
    padding: 7px 0 7px;
}

.options label {
    height: 24px;
    display: flex;
    align-items: center;
    gap: 3px;
    padding-left: 7px;
}

.options input {
    appearance: none;
    width: 13px;
    height: 13px;
    border: 1px solid #333;
    background-color: #fff;
}

.options input:checked::after {
    content: "";
    display: block;
    width: 4px;
    height: 8px;
    margin: 0 0 0 4px;
    border: solid #333;
    border-width: 0 1px 1px 0;
    transform: rotate(42deg);
}

.btn {
    width: 80px;
    height: 21px;
    line-height: 18px;
    border: 1px solid #adadad;
    background-color: #e1e1e1;
}

.options .btn {
    width: auto;
    margin: 4px 15px 0 16px;
}

.colors {
    margin-top: 5px;
    padding: 0 2px 3px;
}

.colors legend {
    height: 18px;
    line-height: 18px;
    margin-left: 5px;
}

.list {
    height: 234px;
    display: flex;
    align-items: stretch;
    border: 1px solid #a0a0a6;
    padding-right: 1px;
    overflow: hidden;
}

table {
    flex: 1;
    height: 248px;
    table-layout: fixed;
    border-collapse: collapse;
    text-align: left;
}

th {
    height: 20px;
    line-height: 18px;
    padding: 0 0 0 4px;
    border: 1px solid #e5e5e5;
    border-width: 0 1px 1px 0;
}

td {
    height: 19px;
    line-height: 17px;
    padding: 0 0 0 4px;
    font-size: 11px;
    border: 1px solid #f0f0f0;
    border-width: 0 1px 1px 0;
}

td:first-child {
    width: 27px;
    border-right: none;
}

td:nth-child(2) {
    width: 124px;
    padding: 0 4px 0 0;
}

td.editing {
    padding: 0;
}

.swatch {
    height: 17px;
    border: 1px solid #000;
}

.red { background-color: #f00; }
.yellow { background-color: #ff0; }
.green { background-color: #0f0; }
.cyan { background-color: #0ff; }
.blue { background-color: #00f; }
.magenta { background-color: #f0f; }
.white { background-color: #fff; }
.gray { background-color: #808080; }
.silver { background-color: #c0c0c0; }
.pink { background-color: #ff8080; }

.combo {
    position: relative;
    height: 17px;
}

.combo select {
    appearance: none;
    width: 100%;
    height: 17px;
    padding-left: 2px;
}

.combo::after {
    content: "";
    position: absolute;
    right: 6px;
    top: 4px;
    width: 5px;
    height: 5px;
    border: solid #444;
    border-width: 0 1px 1px 0;
    transform: rotate(45deg);
}

.combo::before {
    content: "";
    position: absolute;
    right: 0;
    top: 0;
    width: 17px;
    height: 17px;
    border: 1px solid #adadad;
    background-color: #e1e1e1;
    pointer-events: none;
}

.list-actions {
    display: flex;
    justify-content: space-between;
    padding: 7px 4px 0 5px;
}

.dialog-footer {
    height: 38px;
    flex: none;
    display: flex;
    justify-content: flex-end;
    gap: 9px;
    padding: 7px 10px 0 0;
}

.dialog-footer .wide {
    width: 203px;
}

/* red box and arrow pointing at the selected tab */
.callout {
    position: absolute;
    left: 445px;
    top: 48px;
    pointer-events: none;
}
```
